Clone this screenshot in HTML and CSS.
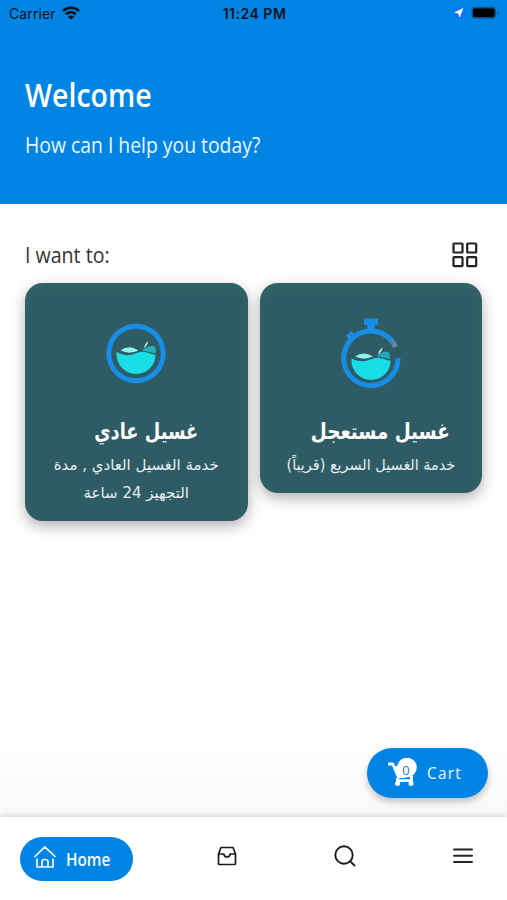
FILE: index.html
```html
<!DOCTYPE html>
<html lang="en">
<head>
<meta charset="utf-8">
<meta name="viewport" content="width=device-width">
<title>Welcome</title>
<link rel="stylesheet" href="styles.css">
</head>
<body>
<div class="app">
  <header class="hero">
    <div class="status">
      <div class="status-left">
        <span class="carrier">Carrier</span>
        <svg class="wifi" viewBox="0 0 18 14"><g fill="none" stroke="#08131d" stroke-width="2.6"><path d="M.9 5C5.4.6 12.6.6 17.1 5"/><path d="M4 8.3c2.8-2.7 7.2-2.7 10 0"/></g><path d="M5.900 10.700c1.800-1.700 4.400-1.700 6.200 0L9 13.800z" fill="#08131d"/></svg>
      </div>
      <span class="time">11:24 PM</span>
      <div class="status-right">
        <svg class="loc" viewBox="0 0 12 12"><rect width="12" height="12" rx="4" fill="#0878f8"/><path d="M10 1.500 6.500 10 5.700 6.200 1.700 5.500z" fill="#fff" stroke="#fff" stroke-width=".6"/></svg>
        <svg class="battery" viewBox="0 0 29 14"><rect x=".5" y=".8" width="24.500" height="12" rx="3.500" fill="#05558f"/><rect x="2" y="2.500" width="21.500" height="8.600" rx="1.800" fill="#000"/><path d="M26.300 4.800v4q1.800-.8 1.800-2t-1.800-2" fill="#05558f"/></svg>
      </div>
    </div>
    <h1 class="welcome"><span>Welcome</span></h1>
    <p class="question"><span>How can I help you today?</span></p>
  </header>

  <main class="content">
    <div class="section-head">
      <h2 class="want"><span>I want to:</span></h2>
      <svg class="grid-icon" viewBox="0 0 26 26" fill="none" stroke="#222" stroke-width="2.200"><rect x="1.500" y="1.500" width="9" height="9" rx=".6"/><rect x="15.200" y="1.500" width="9" height="9" rx=".6"/><rect x="1.500" y="15.200" width="9" height="9" rx=".6"/><rect x="15.200" y="15.200" width="9" height="9" rx=".6"/></svg>
    </div>
    <div class="cards">
      <article class="card">
        <svg class="card-icon" viewBox="0 0 60 74">
          <circle cx="30" cy="39.500" r="27.200" fill="none" stroke="#168ee6" stroke-width="5"/>
          <path d="M10.500 38q5 3 10.500 3.300c8 0 11-4.300 18-3.300 5 1 7 2.500 10.500 2.500A19.500 19 0 0 1 30 60 20 20 0 0 1 10.500 38z" fill="#18dce6"/>
          <path d="M14.500 36.500q8.500-6.500 18 0-9 4.300-18 0z" fill="#8cf5ee"/>
          <path d="M36 36.200q6.500-5.500 12.800-4 1.500 3.500.8 7-5.500-1-13.600-3z" fill="#22b3ba"/>
          <path d="M37.500 34.200q1-4 4.500-7.200 0 4.500-4.500 7.200z" fill="#bcf4ee"/>
        </svg>
        <h3 class="card-title"><span class="title-normal" dir="rtl" lang="ar">غسيل عادي</span></h3>
        <p class="card-text"><span class="text-normal-a" dir="rtl" lang="ar">خدمة الغسيل العادي , مدة</span><span class="text-normal-b" dir="rtl" lang="ar">التجهيز 24 ساعة</span></p>
      </article>
      <article class="card">
        <svg class="card-icon" viewBox="0 0 60 74">
          <defs><linearGradient id="tip" x1="0" y1="0" x2="1" y2="1"><stop offset=".2" stop-color="#168ee6"/><stop offset="1" stop-color="#7b8299"/></linearGradient></defs>
          <path d="M57.100 44A27.200 27.200 0 1 1 46 22.300" fill="none" stroke="#168ee6" stroke-width="5"/>
          <path d="M45.500 22a27.200 27.200 0 0 1 9 11" fill="none" stroke="url(#tip)" stroke-width="5"/>
          <path d="M23 4.500h14v6.200h-3.300v7.500h-7.400v-7.500H23zM5 21.500l5.500-4.500 3.800 4.300-.5 3-4.300 3.400z" fill="#168ee6"/>
          <path d="M10.500 44.500q5 2.500 10.500 2.800c8 0 11-4.300 18-3.300 5 1 7 2.500 10.500 2.500A19.500 19 0 0 1 30 66 19.500 19.500 0 0 1 10.500 44.500z" fill="#18dce6"/>
          <path d="M14 42.500q8.500-6 18 0-9 4.300-18 0z" fill="#8cf5ee"/>
          <path d="M35.500 42q6-5.500 12-4 2 3.500 1.600 7-5.500-1-13.600-3z" fill="#22a7bd"/>
          <path d="M37 40.200q1-4 4.500-7 0 4.500-4.500 7z" fill="#bcf4ee"/>
        </svg>
        <h3 class="card-title"><span class="title-fast" dir="rtl" lang="ar">غسيل مستعجل</span></h3>
        <p class="card-text"><span class="text-fast" dir="rtl" lang="ar">خدمة الغسيل السريع (قريباً)</span></p>
      </article>
    </div>
  </main>

  <button class="cart">
    <span class="cart-icon">
      <svg viewBox="0 0 30 28" fill="#fff"><path d="M0 4.500h4.700q1 0 1.400 1L12 20.500H9.500L4 7.500H0z"/><path d="M5.500 8h12v12H10z"/><circle cx="19" cy="9.500" r="9.800"/><path d="M8 21.200h17v2.800H8z"/><path d="M22 18h3v5h-3zM8 20h2.500v3H8z"/><circle cx="9.500" cy="25.500" r="2.500"/><circle cx="23" cy="25.500" r="2.500"/></svg>
      <span class="badge">0</span>
    </span>
    <span class="cart-label">Cart</span>
  </button>

  <nav class="tabs">
    <a class="tab-home">
      <svg class="home-icon" viewBox="0 0 22 24" fill="none" stroke="#f0fbff" stroke-width="1.700" stroke-linecap="round" stroke-linejoin="round"><path d="M1 11.500 10.800 1.800 21 11.500M3 14v8h5v-5.500q0-2 3-2t3 2V22h5v-8M8 22h6"/></svg>
      <span>Home</span>
    </a>
    <svg class="tab-icon inbox" viewBox="0 0 20 20" fill="none" stroke="#1b1b1b" stroke-width="1.700" stroke-linejoin="round"><path d="M1.500 8 4 1.500h12L18.500 8v9.500q0 1-1 1h-15q-1 0-1-1zM1.500 8h5.300q.5 3 3.200 3t3.200-3h5.300"/></svg>
    <svg class="tab-icon search" viewBox="0 0 22 22" fill="none" stroke="#1b1b1b" stroke-width="1.900" stroke-linecap="round"><circle cx="10" cy="10" r="8.700"/><path d="m16.300 16.300 4.200 4.200"/></svg>
    <svg class="tab-icon menu" viewBox="0 0 22 22" fill="none" stroke="#242424" stroke-width="2" stroke-linecap="round"><path d="M2 4.500h18M2 10.700h18M2 17h18"/></svg>
  </nav>
</div>
</body>
</html>
```
FILE: styles.css
```css
* { box-sizing: border-box; }
body { margin: 0; background: #fff; font-family: "Open Sans", "Noto Sans", sans-serif; }
h1, h2, h3, p { margin: 0; font-weight: 400; white-space: nowrap; }
h1 span, h2 span, h3 span, p span { display: inline-block; }
.app { height: 900px; display: flex; flex-direction: column; overflow: hidden; position: relative; background: linear-gradient(#fff 0 740px, #f8f8f8 817px); }
.hero { height: 204px; background: #0084e3; color: #fff; }
.status { height: 26px; display: grid; grid-template-columns: 1fr auto 1fr; align-items: center; padding: 0 7px 0 9px; color: #08131d; font-family: Inter, sans-serif; font-size: 14px; }
.status-left, .status-right { display: flex; align-items: center; }
.status-right { justify-content: flex-end; gap: 6px; }
.carrier { letter-spacing: .1px; }
.wifi { width: 18px; height: 14px; margin-left: 6px; }
.time { font-weight: 600; letter-spacing: .5px; }
.loc { width: 12px; height: 12px; }
.battery { width: 29px; height: 14px; }
.welcome { margin: 46px 0 0 25px; height: 45px; line-height: 45px; font-size: 33px; font-weight: 600; }
.welcome span { transform: scaleX(.865); transform-origin: left; }
.question { margin: 12px 0 0 25px; height: 30px; line-height: 30px; font-size: 22px; color: #e9f7ff; }
.question span { transform: scaleX(.88); transform-origin: left; }
.content { flex: 1; padding: 37px 25px 0; }
.section-head { display: flex; justify-content: space-between; height: 42px; }
.want { line-height: 26px; font-size: 22px; color: #333; }
.want span { transform: scaleX(.89); transform-origin: left; }
.grid-icon { width: 26px; height: 26px; margin: 1px 4px 0 0; }
.cards { display: grid; grid-template-columns: 1fr 1fr; gap: 12px; align-items: start; }
.card { border-radius: 18px; padding: 31px 0 14px; background: #2f5c64; color: #fff; display: flex; flex-direction: column; align-items: center; box-shadow: 0 5px 14px rgba(35, 30, 45, .36), inset 0 4px 12px rgba(51, 112, 108, .45); }
.card-icon { width: 60px; height: 74px; }
.card-title { height: 40px; margin-top: 24px; padding-left: 19px; font: 700 22px/40px "DejaVu Sans", sans-serif; }
.title-normal { transform: scaleX(.81); }
.title-fast { transform: scaleX(.835); }
.card-text { display: flex; flex-direction: column; align-items: center; font: 15px/28px "DejaVu Sans", sans-serif; color: #e4eef3; margin-top: -1px; }
.text-fast { transform: scaleX(.96); }
.cart { position: absolute; left: 367px; top: 748px; width: 121px; height: 50px; border: 0; border-radius: 25px; background: #0084e3; color: #effaff; display: flex; align-items: center; padding: 0 0 0 21px; box-shadow: 0 4px 7px rgba(0, 0, 0, .22); font-family: "Open Sans", sans-serif; }
.cart-icon { position: relative; width: 30px; height: 28px; margin-top: -2px; }
.cart-icon svg { width: 30px; height: 28px; display: block; }
.badge { position: absolute; left: 13px; top: 3px; width: 10px; line-height: 18px; font-size: 13px; text-align: center; color: #327ca9; }
.cart-label { margin: -2px 0 0 9px; font-size: 17px; letter-spacing: 1.4px; transform: scaleX(.9); transform-origin: left; }
.tabs { position: relative; height: 83px; background: #fff; box-shadow: 0 -2px 6px rgba(0, 0, 0, .12); display: flex; padding-left: 20px; }
.tab-home { width: 113px; height: 44px; margin-top: 20px; border-radius: 22px; background: #0084e3; color: #f4fcff; display: flex; align-items: center; padding-left: 14px; font-size: 18px; font-weight: 600; }
.home-icon { width: 22px; height: 24px; margin-top: -5px; }
.tab-home span { margin-left: 10px; transform: scaleX(.85); transform-origin: left; }
.tab-icon { margin-top: 28px; }
.inbox { width: 20px; height: 20px; margin: 29px 0 0 84px; }
.search { width: 22px; height: 22px; margin-left: 97px; }
.menu { width: 22px; height: 22px; margin-left: 96px; }
```
